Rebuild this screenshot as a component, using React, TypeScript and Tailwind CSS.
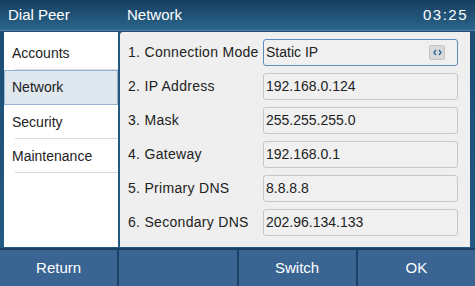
import React from 'react';

const menu = ['Accounts', 'Network', 'Security', 'Maintenance'];

const rows = [
  { label: '1. Connection Mode', value: 'Static IP', select: true },
  { label: '2. IP Address', value: '192.168.0.124' },
  { label: '3. Mask', value: '255.255.255.0' },
  { label: '4. Gateway', value: '192.168.0.1' },
  { label: '5. Primary DNS', value: '8.8.8.8' },
  { label: '6. Secondary DNS', value: '202.96.134.133' },
];

const keys = ['Return', '', 'Switch', 'OK'];

export default function App() {
  return (
    <div className="w-[475px] h-[286px] flex flex-col bg-gradient-to-b from-[#1b4a70] to-[#245c86] font-['Liberation_Sans',sans-serif] overflow-hidden">
      {/* Title bar */}
      <div className="h-[31px] flex items-center text-white text-[15px] bg-gradient-to-b from-[#173f60] to-[#2a658c] border-b border-[#4d7da3]">
        <span className="w-[119px] pl-[8px]">Dial Peer</span>
        <span className="flex-1 pl-[8px]">Network</span>
        <span className="pr-[7px] tracking-[1.5px]">03:25</span>
      </div>

      {/* Body */}
      <div className="flex-1 flex pl-[4px] pr-[5px] pt-[1px]">
        {/* Side menu */}
        <div className="w-[114px] bg-white pt-[4px]">
          {menu.map((m) =>
            m === 'Network' ? (
              <div key={m} className="h-[35px] flex items-center pl-[7px] text-[14px] text-[#222] bg-[#dfe7ef] border border-[#93b3d0]">
                {m}
              </div>
            ) : (
              <div key={m} className="h-[34px] flex items-center pl-[8px] text-[14px] text-[#222] relative">
                {m}
                <div className="absolute left-[11px] right-0 bottom-0 h-px bg-[#dcdcdc]" />
              </div>
            )
          )}
        </div>

        <div className="w-[2px] bg-[#24597f]" />

        {/* Settings panel */}
        <div className="flex-1 bg-[#efefef] rounded-tl-[3px] pt-[3px]">
          {rows.map((r) => (
            <div key={r.label} className="h-[34px] flex items-center">
              <span className="w-[143px] pl-[8px] text-[14px] tracking-[0.3px] text-[#222]">{r.label}</span>
              <div
                className={`w-[195px] h-[27px] flex items-center justify-between pl-[2px] pr-[12px] rounded-[3px] bg-[#f0f0f0] text-[14px] text-[#222] border ${
                  r.select ? 'border-[#5f8cc0]' : 'border-[#c6c6c6]'
                }`}
              >
                <span>{r.value}</span>
                {r.select && (
                  <span className="w-[16px] h-[15px] flex items-center justify-center rounded-[2px] bg-[#d9d9d9] border border-[#c4c4c4]">
                    <svg width="9" height="7" viewBox="0 0 9 7">
                      <path d="M3 1 L1 3.5 L3 6 M6 1 L8 3.5 L6 6" fill="none" stroke="#2b6ea3" strokeWidth="1.4" />
                    </svg>
                  </span>
                )}
              </div>
            </div>
          ))}
        </div>
      </div>

      {/* Soft keys */}
      <div className="h-[38px] grid grid-cols-4 gap-[2px] bg-[#1c3f66] pt-[2px] mt-[1px]">
        {keys.map((k, i) => (
          <div key={i} className="flex items-center justify-center bg-[#3a6592] text-white text-[15px]">
            {k}
          </div>
        ))}
      </div>
    </div>
  );
}
